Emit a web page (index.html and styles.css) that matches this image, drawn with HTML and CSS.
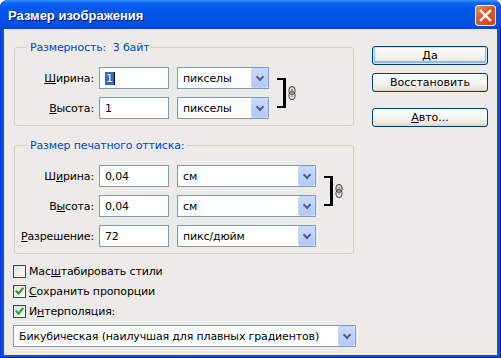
FILE: index.html
```html
<!DOCTYPE html>
<html lang="ru">
<head>
  <meta charset="UTF-8">
  <title>Размер изображения</title>
  <link rel="stylesheet" href="styles.css">
</head>
<body>
  <div class="window">
    <div class="titlebar">
      <span class="title">Размер изображения</span>
      <button class="close" aria-label="Закрыть">
        <svg width="13" height="13" viewBox="0 0 13 13"><path d="M2 2 L11 11 M11 2 L2 11" stroke="#fff" stroke-width="2.4" stroke-linecap="square"/></svg>
      </button>
    </div>

    <div class="client">
      <div class="main">
        <!-- Pixel dimensions -->
        <fieldset class="group">
          <legend>Размерность:&nbsp; 3 байт</legend>
          <div class="grid grid-pixels">
            <label><u>Ш</u>ирина:</label>
            <div class="field"><span class="selected">1</span><span class="caret"></span></div>
            <div class="select"><span>пикселы</span><i class="arrow"></i></div>
            <div class="link">
              <span class="bracket"></span>
              <svg class="chain" width="8" height="14" viewBox="0 0 8 14"><rect x="1" y="0.5" width="6" height="8" rx="3" fill="#d8d8d8" stroke="#3a3a3a"/><rect x="1" y="5.5" width="6" height="8" rx="3" fill="none" stroke="#3a3a3a"/><path d="M4 3 V11" stroke="#7a7a7a" stroke-width="1.2"/></svg>
            </div>
            <label><u>В</u>ысота:</label>
            <div class="field">1</div>
            <div class="select"><span>пикселы</span><i class="arrow"></i></div>
          </div>
        </fieldset>

        <!-- Document size -->
        <fieldset class="group">
          <legend>Размер печатного оттиска:</legend>
          <div class="grid grid-print">
            <label>Ш<u>и</u>рина:</label>
            <div class="field">0,04</div>
            <div class="select"><span>см</span><i class="arrow"></i></div>
            <div class="link">
              <span class="bracket"></span>
              <svg class="chain" width="8" height="14" viewBox="0 0 8 14"><rect x="1" y="0.5" width="6" height="8" rx="3" fill="#d8d8d8" stroke="#3a3a3a"/><rect x="1" y="5.5" width="6" height="8" rx="3" fill="none" stroke="#3a3a3a"/><path d="M4 3 V11" stroke="#7a7a7a" stroke-width="1.2"/></svg>
            </div>
            <label>В<u>ы</u>сота:</label>
            <div class="field">0,04</div>
            <div class="select"><span>см</span><i class="arrow"></i></div>
            <label><u>Р</u>азрешение:</label>
            <div class="field">72</div>
            <div class="select"><span>пикс/дюйм</span><i class="arrow"></i></div>
          </div>
        </fieldset>

        <div class="checks">
          <div class="check"><span class="box"></span>Мас<u>ш</u>табировать стили</div>
          <div class="check"><span class="box checked"></span><u>С</u>охранить пропорции</div>
          <div class="check"><span class="box checked"></span>И<u>н</u>терполяция:</div>
        </div>

        <div class="select select-wide"><span>Бикубическая (наилучшая для плавных градиентов)</span><i class="arrow"></i></div>
      </div>

      <div class="side">
        <button class="btn btn-default">Да</button>
        <button class="btn">Восстановить</button>
        <button class="btn btn-auto"><u>А</u>вто...</button>
      </div>
    </div>
  </div>
</body>
</html>
```

FILE: styles.css
```css
/* Reset */
html, body {
  margin: 0;
  padding: 0;
  background: #fff;
}

body {
  font-family: "DejaVu Sans", sans-serif;
  font-size: 11px;
  letter-spacing: -0.15px;
  color: #000;
}

u {
  text-decoration: underline;
  text-underline-offset: 1px;
}

.window {
  width: 501px;
  height: 358px;
  box-sizing: border-box;
  display: flex;
  flex-direction: column;
  background: #0055e5;
  border-radius: 8px 8px 0 0;
  box-shadow: inset 1px 0 #0831d9, inset -1px 0 #001ea0, inset 0 -1px #001ea0;
}

/* Title bar */
.titlebar {
  height: 29px;
  flex-shrink: 0;
  display: flex;
  align-items: center;
  justify-content: space-between;
  padding: 0 5px 0 8px;
  border-radius: 7px 7px 0 0;
  background: linear-gradient(#3d95ff 0, #0a66f0 3px, #0058ee 8px, #0055e5 50%, #0052e0 80%, #0046d8 100%);
}

.title {
  color: #fff;
  font-family: "Liberation Sans", sans-serif;
  font-weight: bold;
  font-size: 13px;
  letter-spacing: 0;
  text-shadow: 1px 1px #0f1089;
  margin-top: 2px;
}

.close {
  width: 21px;
  height: 21px;
  margin-top: 2px;
  padding: 0;
  border: 1px solid #fff;
  border-radius: 3px;
  background: linear-gradient(135deg, #e98a6b 0, #e2552d 45%, #cc4418 100%);
  display: flex;
  align-items: center;
  justify-content: center;
}

/* Client area */
.client {
  flex: 1;
  display: flex;
  margin: 0 4px 3px 4px;
  padding: 12px 0 0 9px;
  background: #ecebe8;
}

.main {
  width: 343px;
  display: flex;
  flex-direction: column;
}

.group {
  margin: 0 2px 0 1px;
  padding: 13px 0 6px 0;
  border: 1px solid #d0d0bf;
  border-radius: 3px;
}

.group + .group {
  margin-top: 13px;
}

.group legend {
  margin-left: 11px;
  padding: 0 2px 0 4px;
  color: #0046d5;
  line-height: 13px;
}

.grid {
  display: grid;
  grid-auto-rows: 22px;
  row-gap: 8px;
  align-items: center;
}

.grid-pixels {
  grid-template-columns: 84px 78px 92px auto;
}

.grid-print {
  grid-template-columns: 84px 78px 139px auto;
}

.grid label {
  text-align: right;
  padding-right: 5px;
}

.field {
  width: 70px;
  height: 22px;
  box-sizing: border-box;
  border: 1px solid #7f9db9;
  background: #fff;
  padding-left: 5px;
  display: flex;
  align-items: center;
}

.field .selected {
  background: #316ac5;
  color: #fff;
  padding: 0 1px;
  line-height: 13px;
}

.field .caret {
  width: 1px;
  height: 13px;
  background: #000;
}

.select {
  height: 22px;
  box-sizing: border-box;
  border: 1px solid #7f9db9;
  background: #fff;
  display: flex;
  align-items: center;
  justify-content: space-between;
}

.select span {
  padding-left: 5px;
  white-space: nowrap;
}

.select .arrow {
  width: 17px;
  height: 100%;
  box-sizing: border-box;
  border: 1px solid #c4d5fb;
  border-radius: 2px;
  background: linear-gradient(#c9dafc, #b4c8f6);
  display: flex;
  align-items: center;
  justify-content: center;
}

.select .arrow::after {
  content: "";
  width: 4px;
  height: 4px;
  border-right: 2px solid #4d6185;
  border-bottom: 2px solid #4d6185;
  transform: translateY(-1px) rotate(45deg);
}

.link {
  grid-column: 4;
  grid-row: 1 / span 2;
  align-self: stretch;
  display: flex;
  align-items: center;
  margin: 11px 0 11px 8px;
}

.bracket {
  width: 9px;
  height: 100%;
  box-sizing: border-box;
  border: 2px solid #000;
  border-left: 0;
  border-right-width: 3px;
}

.chain {
  margin-left: 2px;
}

/* Checkboxes */
.checks {
  margin-top: 7px;
  display: flex;
  flex-direction: column;
}

.check {
  height: 20px;
  display: flex;
  align-items: center;
}

.box {
  width: 13px;
  height: 13px;
  box-sizing: border-box;
  border: 1px solid #1c5180;
  background: linear-gradient(135deg, #dcdcd7, #fff);
  margin-right: 3px;
  display: flex;
  align-items: center;
  justify-content: center;
}

.box.checked::after {
  content: "";
  width: 3px;
  height: 6px;
  border-right: 2px solid #21a121;
  border-bottom: 2px solid #21a121;
  transform: translateY(-1px) rotate(40deg);
}

.select-wide {
  margin-top: 4px;
}

/* Buttons */
.side {
  margin-left: 16px;
  padding-top: 5px;
  display: flex;
  flex-direction: column;
}

.btn {
  width: 116px;
  height: 19px;
  padding: 0;
  font: inherit;
  color: #000;
  border: 1px solid #003c74;
  border-radius: 3px;
  background: linear-gradient(#fff, #f3f2ee 60%, #e6e3da 90%, #d6d0c5);
  margin-bottom: 8px;
}

.btn-default {
  box-shadow: inset 0 0 0 1px #cee7ff, inset 0 -1px 0 2px #98b8ea;
}

.btn-auto {
  margin-top: 8px;
}
```
